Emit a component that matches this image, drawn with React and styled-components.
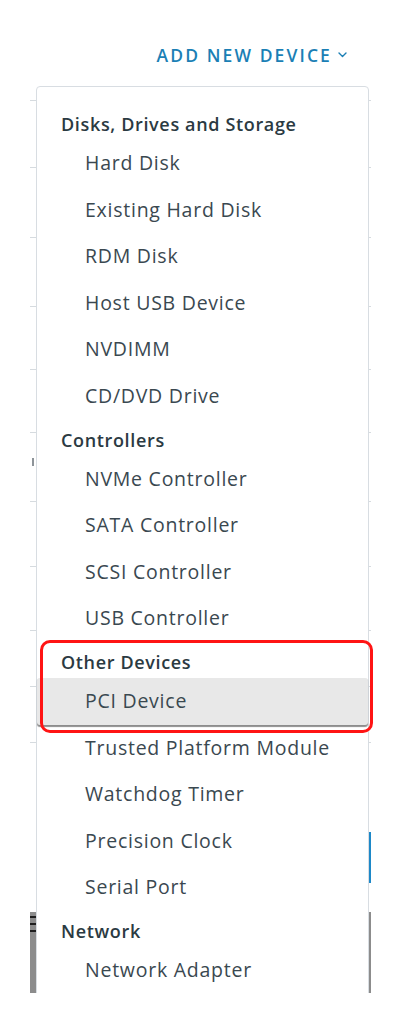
import React from 'react'
import styled, { createGlobalStyle } from 'styled-components'

const GlobalStyle = createGlobalStyle`
  html, body {
    margin: 0;
    padding: 0;
    background: #ffffff;
  }
  body {
    font-family: "Open Sans", "Liberation Sans", sans-serif;
    -webkit-font-smoothing: antialiased;
  }
`

const groups = [
  {
    title: 'Disks, Drives and Storage',
    items: ['Hard Disk', 'Existing Hard Disk', 'RDM Disk', 'Host USB Device', 'NVDIMM', 'CD/DVD Drive'],
  },
  {
    title: 'Controllers',
    items: ['NVMe Controller', 'SATA Controller', 'SCSI Controller', 'USB Controller'],
  },
  {
    title: 'Other Devices',
    items: ['PCI Device', 'Trusted Platform Module', 'Watchdog Timer', 'Precision Clock', 'Serial Port'],
  },
  {
    title: 'Network',
    items: ['Network Adapter'],
  },
]

// heights of the rows of the form that sits under the menu
const sheetRows = [15, 67, 70, 69, 63, 63, 69, 65, 64, 56, 56]

const Chevron = () => (
  <svg width="9" height="6" viewBox="0 0 9 6" fill="none">
    <polyline points="1,1 4.5,4.5 8,1" stroke="#1b7fb5" strokeWidth="1.4" strokeLinecap="round" strokeLinejoin="round" />
  </svg>
)

class App extends React.Component {
  render() {
    return (
      <Root>
        <GlobalStyle />
        <Toolbar>
          <AddButton>
            ADD NEW DEVICE
            <Chevron />
          </AddButton>
        </Toolbar>

        <Sheet>
          {sheetRows.map((h, i) => (
            <SheetRow key={i} $h={h}>
              {i === 6 && <Caret />}
            </SheetRow>
          ))}
          <Spacer $h={89} />
          <FocusedField />
          <Spacer $h={29} />
          <DarkPanel>
            <Dash />
            <Dash />
            <Dash />
          </DarkPanel>
        </Sheet>

        <Menu>
          {groups.map((g) => (
            <Group key={g.title}>
              <GroupTitle>{g.title}</GroupTitle>
              {g.items.map((item) => (
                <Item key={item} $active={item === 'PCI Device'}>
                  {item}
                </Item>
              ))}
            </Group>
          ))}
        </Menu>

        <Callout />
      </Root>
    )
  }
}

const Root = styled.div`
  position: relative;
  width: 402px;
  height: 993px;
  overflow: hidden;
  background: #ffffff;
`

const Toolbar = styled.div`
  display: flex;
  justify-content: flex-end;
  align-items: center;
  height: 86px;
  padding: 44px 55px 20px 0;
  box-sizing: border-box;
`

const AddButton = styled.div`
  display: flex;
  align-items: center;
  gap: 6px;
  color: #1b7fb5;
  font-family: "Open Sans", "Liberation Sans", sans-serif;
  font-size: 17.5px;
  font-weight: 600;
  letter-spacing: 2.1px;
  line-height: 22px;
`

const Sheet = styled.div`
  display: flex;
  flex-direction: column;
  margin-left: 30px;
  width: 341px;
`

const SheetRow = styled.div`
  position: relative;
  height: ${(p) => p.$h}px;
  border-bottom: 1px solid #d6dbdf;
  box-sizing: border-box;
`

const Caret = styled.span`
  position: absolute;
  left: 2px;
  top: 25px;
  width: 2px;
  height: 8px;
  background: #8e9499;
`

const Spacer = styled.div`
  height: ${(p) => p.$h}px;
`

const FocusedField = styled.div`
  height: 51px;
  border-right: 2px solid #1d88c8;
`

const DarkPanel = styled.div`
  display: flex;
  flex-direction: column;
  gap: 5px;
  height: 90px;
  padding-top: 4px;
  box-sizing: border-box;
  background: #8c8c8c;
`

const Dash = styled.span`
  width: 6px;
  height: 2px;
  background: #1e1e1e;
`

const Menu = styled.div`
  position: absolute;
  top: 86px;
  left: 36px;
  width: 333px;
  padding: 17px 0 40px;
  box-sizing: border-box;
  background: #ffffff;
  border: 1.5px solid #d8dde2;
  border-radius: 4px;
`

const Group = styled.div`
  display: flex;
  flex-direction: column;
`

const GroupTitle = styled.div`
  height: 36px;
  padding: 4px 0 0 24px;
  box-sizing: border-box;
  line-height: 32px;
  font-size: 18px;
  font-weight: 600;
  letter-spacing: 0.65px;
  color: #2b3a42;
  white-space: nowrap;
`

const Item = styled.div`
  height: 46.6px;
  line-height: 46.6px;
  padding-left: 48px;
  font-size: 19.5px;
  font-weight: 400;
  letter-spacing: 0.75px;
  color: #3a4850;
  white-space: nowrap;
  border-radius: 3px;
  background: ${(p) => (p.$active ? '#e8e8e8' : 'transparent')};
  box-shadow: ${(p) => (p.$active ? '0 1.5px 1px rgba(0, 0, 0, 0.45)' : 'none')};
`

const Callout = styled.div`
  position: absolute;
  left: 40px;
  top: 640px;
  width: 333px;
  height: 93px;
  box-sizing: border-box;
  border: 3px solid #ff1414;
  border-radius: 10px;
`

export default App
